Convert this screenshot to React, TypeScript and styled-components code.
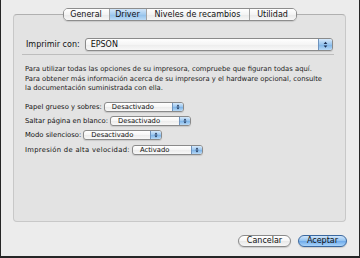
import React from "react";
import styled, { createGlobalStyle } from "styled-components";

const GlobalStyle = createGlobalStyle`
  html, body { margin: 0; padding: 0; background: #ececec; }
  body { font-family: "DejaVu Sans", "Liberation Sans", sans-serif; }
`;

const Window = styled.div`
  width: 360px;
  height: 258px;
  box-sizing: border-box;
  background: #ececec;
  border-left: 1px solid #262626;
  border-right: 1px solid #262626;
  border-bottom: 2px solid #262626;
  padding: 14px 12px 0 12px;
  display: flex;
  flex-direction: column;
  font-family: "DejaVu Sans", "Liberation Sans", sans-serif;
  color: #111;
`;

const Group = styled.section`
  height: 208px;
  box-sizing: border-box;
  margin-right: 1px;
  border: 1px solid #c8c8c8;
  border-top-color: #b0b0b0;
  border-radius: 4px;
  background: #e3e3e3;
  display: flex;
  flex-direction: column;
  padding: 0 12px;
`;

const TabBar = styled.div`
  align-self: center;
  margin-top: -7px;
  display: flex;
  height: 13px;
  box-sizing: border-box;
  border: 1px solid #8d8d8d;
  border-radius: 5px;
  overflow: hidden;
  box-shadow: 0 1px 1px rgba(0, 0, 0, 0.12);
`;

const Tab = styled.div<{ $active?: boolean; $w: number }>`
  width: ${(p) => p.$w}px;
  box-sizing: border-box;
  text-align: center;
  font-size: 8px;
  line-height: 11px;
  white-space: nowrap;
  color: #111;
  background: ${(p) =>
    p.$active
      ? "linear-gradient(#d2e6f9, #a3cbef 50%, #8fbfea 51%, #bcdbf6)"
      : "linear-gradient(#ffffff, #f4f4f4 50%, #e9e9e9 51%, #f6f6f6)"};
  & + & {
    border-left: 1px solid #a3a3a3;
  }
`;

const PrinterRow = styled.div`
  display: flex;
  align-items: center;
  gap: 5px;
  margin-top: 17px;
  height: 13px;
`;

const RegularLabel = styled.span`
  font-size: 8px;
  white-space: nowrap;
`;

const Separator = styled.div`
  height: 1px;
  margin: 3px -1px 0 -4px;
  background: #bdbdbd;
`;

const Description = styled.p`
  margin: 10.4px 0 0 -1px;
  font-size: 6.8px;
  line-height: 9.2px;
  color: #1c1c1c;
`;

const Options = styled.div`
  display: flex;
  flex-direction: column;
  gap: 4.2px;
  margin: 9px 0 0 -1px;
`;

const OptionRow = styled.div`
  display: flex;
  align-items: center;
  gap: 2px;
  height: 10px;
`;

const SmallLabel = styled.span<{ $spacing?: number }>`
  font-size: 6.8px;
  white-space: nowrap;
  letter-spacing: ${(p) => p.$spacing ?? 0}px;
`;

const PopupBox = styled.div<{ $w: number; $h: number }>`
  width: ${(p) => p.$w}px;
  height: ${(p) => p.$h}px;
  flex: none;
  box-sizing: border-box;
  display: flex;
  border: 1px solid #8a8a8a;
  border-radius: 3px;
  overflow: hidden;
  background: linear-gradient(#ffffff, #f5f5f5 50%, #ececec 51%, #f8f8f8);
  box-shadow: 0 1px 1px rgba(0, 0, 0, 0.12);
`;

const PopupText = styled.span<{ $small?: boolean }>`
  flex: 1;
  font-size: ${(p) => (p.$small ? "6.8px" : "8px")};
  line-height: ${(p) => (p.$small ? "8px" : "11px")};
  padding-left: ${(p) => (p.$small ? "7px" : "5px")};
  white-space: nowrap;
  color: #111;
`;

const PopupArrow = styled.span<{ $w: number }>`
  width: ${(p) => p.$w}px;
  flex: none;
  display: flex;
  align-items: center;
  justify-content: center;
  border-left: 1px solid #6f93bd;
  background: linear-gradient(#d6e9fb, #97c4ee 50%, #7cb3e7 51%, #b8d9f6);
`;

const ButtonRow = styled.div`
  display: flex;
  justify-content: flex-end;
  gap: 7px;
  margin-top: 13px;
`;

const PushButton = styled.div<{ $w: number; $default?: boolean }>`
  width: ${(p) => p.$w}px;
  height: 12px;
  box-sizing: border-box;
  border-radius: 6px;
  text-align: center;
  font-size: 8px;
  line-height: 10px;
  color: #111;
  border: 1px solid ${(p) => (p.$default ? "#3b689e" : "#8a8a8a")};
  background: ${(p) =>
    p.$default
      ? "linear-gradient(#cfe5fb, #8fc1f0 50%, #6eaaea 51%, #a9d4fb)"
      : "linear-gradient(#ffffff, #f5f5f5 50%, #e8e8e8 51%, #f7f7f7)"};
  box-shadow: 0 1px 1px rgba(0, 0, 0, 0.15);
`;

const Arrows = ({ size }: { size: number }) => (
  <svg width={size} height={size * 1.5} viewBox="0 0 6 9">
    <path d="M0.8 3.6 L3 0.8 L5.2 3.6 Z M0.8 5.4 L3 8.2 L5.2 5.4 Z" fill="#1b2f52" />
  </svg>
);

const Popup = ({ value, w, small }: { value: string; w: number; small?: boolean }) => (
  <PopupBox $w={w} $h={small ? 10 : 13}>
    <PopupText $small={small}>{value}</PopupText>
    <PopupArrow $w={small ? 10 : 13}>
      <Arrows size={small ? 4 : 5} />
    </PopupArrow>
  </PopupBox>
);

const options = [
  { label: "Papel grueso y sobres:", value: "Desactivado", w: 80, spacing: 0 },
  { label: "Saltar página en blanco:", value: "Desactivado", w: 81, spacing: 0 },
  { label: "Modo silencioso:", value: "Desactivado", w: 79, spacing: 0 },
  { label: "Impresión de alta velocidad:", value: "Activado", w: 71, spacing: 0.3 },
];

export default function App() {
  return (
    <>
      <GlobalStyle />
      <Window>
        <Group>
          <TabBar>
            <Tab $w={45}>General</Tab>
            <Tab $w={37} $active>
              Driver
            </Tab>
            <Tab $w={103}>Niveles de recambios</Tab>
            <Tab $w={47}>Utilidad</Tab>
          </TabBar>
          <PrinterRow>
            <RegularLabel>Imprimir con:</RegularLabel>
            <Popup value="EPSON" w={248} />
          </PrinterRow>
          <Separator />
          <Description>
            Para utilizar todas las opciones de su impresora, compruebe que figuran todas aquí.
            <br />
            Para obtener más información acerca de su impresora y el hardware opcional, consulte
            <br />
            la documentación suministrada con ella.
          </Description>
          <Options>
            {options.map((o) => (
              <OptionRow key={o.label}>
                <SmallLabel $spacing={o.spacing}>{o.label}</SmallLabel>
                <Popup value={o.value} w={o.w} small />
              </OptionRow>
            ))}
          </Options>
        </Group>
        <ButtonRow>
          <PushButton $w={53}>Cancelar</PushButton>
          <PushButton $w={49} $default>
            Aceptar
          </PushButton>
        </ButtonRow>
      </Window>
    </>
  );
}
